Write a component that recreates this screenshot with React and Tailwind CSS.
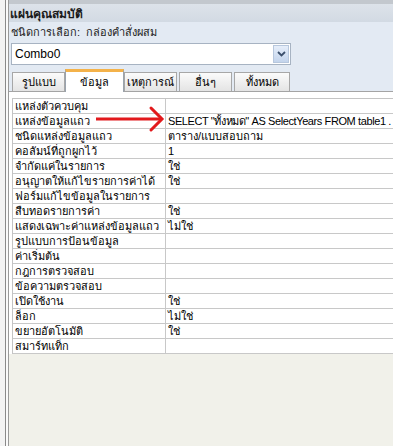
import React from "react";

const rows = [
  ["แหล่งตัวควบคุม", ""],
  ["แหล่งข้อมูลแถว", "SELECT \"ทั้งหมด\" AS SelectYears FROM table1 ."],
  ["ชนิดแหล่งข้อมูลแถว", "ตาราง/แบบสอบถาม"],
  ["คอลัมน์ที่ถูกผูกไว้", "1"],
  ["จำกัดแค่ในรายการ", "ใช่"],
  ["อนุญาตให้แก้ไขรายการค่าได้", "ใช่"],
  ["ฟอร์มแก้ไขข้อมูลในรายการ", ""],
  ["สืบทอดรายการค่า", "ใช่"],
  ["แสดงเฉพาะค่าแหล่งข้อมูลแถว", "ไม่ใช่"],
  ["รูปแบบการป้อนข้อมูล", ""],
  ["ค่าเริ่มต้น", ""],
  ["กฎการตรวจสอบ", ""],
  ["ข้อความตรวจสอบ", ""],
  ["เปิดใช้งาน", "ใช่"],
  ["ล็อก", "ไม่ใช่"],
  ["ขยายอัตโนมัติ", "ใช่"],
  ["สมาร์ทแท็ก", ""],
];

const tabs = [
  { label: "รูปแบบ", w: "w-[53px]" },
  { label: "ข้อมูล", w: "w-[59px]", active: true },
  { label: "เหตุการณ์", w: "w-[53px]" },
  { label: "อื่นๆ", w: "w-[53px]" },
  { label: "ทั้งหมด", w: "w-[56px]" },
];

export default function App() {
  return (
    <div
      className="w-[393px] h-[446px] flex overflow-hidden bg-[#f1f1ea] text-black relative"
      style={{ fontFamily: "'Liberation Sans', 'DejaVu Sans', 'Noto Sans', sans-serif" }}
    >
      {/* left splitter edge */}
      <div className="w-[6px] shrink-0 bg-[#f3f3f3] border-r border-[#8a8a8a]" />
      <div className="w-[3px] shrink-0 bg-[#fafafa] border-r border-[#9a9a9a]" />

      <div className="flex-1 flex flex-col min-w-0">
        {/* title bar */}
        <div className="h-[4px] bg-[#c3c8ce]" />
        <div className="h-[18px] bg-gradient-to-b from-[#dde3ea] to-[#d2dae3] flex items-center pl-[1px] pt-[2px] text-[12px] font-bold text-[#1a1a1a]">
          แผ่นคุณสมบัติ
        </div>

        {/* selection header */}
        <div className="bg-[#e3eaf3] pl-[2px] pt-[2px] flex flex-col">
          <div className="h-[16px] flex items-center text-[11px] text-[#222]">
            <span>ชนิดการเลือก:</span>
            <span className="ml-[6px]">กล่องคำสั่งผสม</span>
          </div>
          <div className="mt-[3px] w-[280px] h-[22px] bg-white border border-[#a7b3c2] flex items-center justify-between">
            <span className="pl-[3px] text-[12px]">Combo0</span>
            <div className="w-[16px] h-[18px] mr-[1px] bg-gradient-to-b from-[#e6eefa] to-[#c3d4ec] border border-[#b7c7dd] flex items-center justify-center">
              <svg width="9" height="6" viewBox="0 0 9 6">
                <path d="M1 1 L4.5 4.5 L8 1" fill="none" stroke="#3b4f6c" strokeWidth="1.8" />
              </svg>
            </div>
          </div>
          {/* tabs */}
          <div className="mt-[3px] h-[23px] flex items-end pl-[1px] gap-[2px]">
            {tabs.map((t) =>
              t.active ? (
                <div
                  key={t.label}
                  className={`${t.w} h-[23px] -mx-[2px] -mb-[1px] relative z-10 bg-white border border-b-0 border-[#9aa3ad] border-t-[3px] border-t-[#f4b24a] flex items-center justify-center text-[11px]`}
                >
                  {t.label}
                </div>
              ) : (
                <div
                  key={t.label}
                  className={`${t.w} h-[19px] bg-gradient-to-b from-[#fbfbfb] to-[#e4e4e4] border border-b-0 border-[#a7a7a7] flex items-center justify-center text-[11px]`}
                >
                  {t.label}
                </div>
              )
            )}
          </div>
        </div>

        {/* tab page */}
        <div className="border-t border-[#a4a4a4] bg-white pt-[6px] pl-[3px]">
          <div className="border-l border-t border-[#c4c4c4]">
            {rows.map(([k, v], i) => (
              <div key={k} className="h-[15px] flex border-b border-[#c8c8c8] text-[11px] leading-[14px]">
                <div className="w-[153px] shrink-0 border-r border-[#c8c8c8] pl-[2px] whitespace-nowrap overflow-hidden">
                  {k}
                </div>
                <div
                  className={`flex-1 pl-[2px] whitespace-nowrap overflow-hidden ${
                    i === 1 ? "tracking-[-0.4px]" : ""
                  }`}
                >
                  {v}
                </div>
              </div>
            ))}
          </div>
        </div>
        <div className="flex-1 bg-[#f1f1ea]" />
      </div>

      {/* red arrow annotation */}
      <svg className="absolute left-[94px] top-[105px]" width="72" height="28" viewBox="0 0 72 28">
        <path d="M2 14 H67" stroke="#e2191c" strokeWidth="3" />
        <path d="M57 3 L68 14 L57 25" fill="none" stroke="#e2191c" strokeWidth="3" strokeLinecap="round" />
      </svg>
    </div>
  );
}
